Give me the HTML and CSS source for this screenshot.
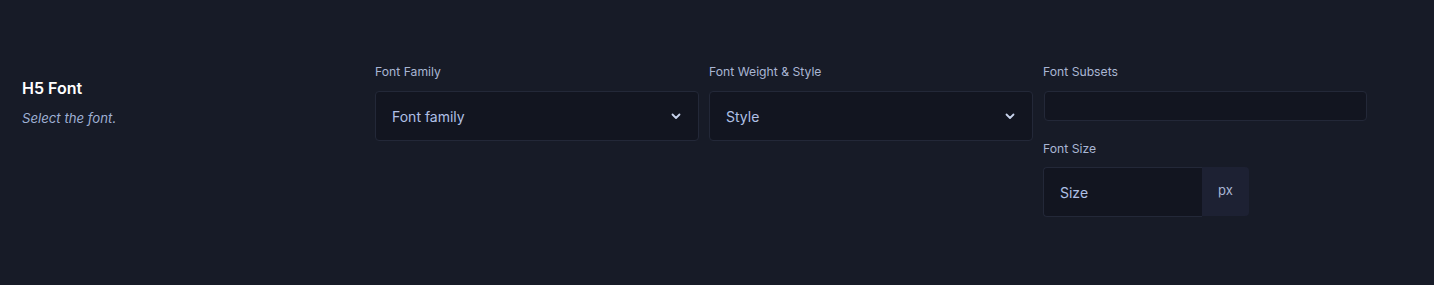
FILE: index.html
```html
<!DOCTYPE html>
<html lang="en">
  <head>
    <meta charset="UTF-8" />
    <title>H5 Font</title>
    <link rel="stylesheet" href="styles.css">
  </head>
  <body>
    <section class="setting">
      <div class="setting-info">
        <h5>H5 Font</h5>
        <p>Select the font.</p>
      </div>
      <div class="fields">
        <div class="field">
          <label for="family">Font Family</label>
          <div class="select">
            <span>Font family</span>
            <svg width="10" height="7" viewBox="0 0 10 7"><path d="M1.5 1.5 5 5l3.5-3.5" fill="none" stroke="currentColor" stroke-width="1.8" stroke-linecap="round" stroke-linejoin="round"/></svg>
          </div>
        </div>
        <div class="field">
          <label for="style">Font Weight &amp; Style</label>
          <div class="select">
            <span>Style</span>
            <svg width="10" height="7" viewBox="0 0 10 7"><path d="M1.5 1.5 5 5l3.5-3.5" fill="none" stroke="currentColor" stroke-width="1.8" stroke-linecap="round" stroke-linejoin="round"/></svg>
          </div>
        </div>
        <div class="field">
          <label for="subsets">Font Subsets</label>
          <div class="subsets"></div>
          <label for="size" class="size-label">Font Size</label>
          <div class="size">
            <input id="size" type="text" placeholder="Size" />
            <span class="unit">px</span>
          </div>
        </div>
      </div>
    </section>
  </body>
</html>
```

FILE: styles.css
```css
body {
  margin: 0;
  background-color: #171b27;
  font-family: "Inter", "Noto Sans", sans-serif;
  color: #b0c0e6;
}
.setting {
  display: flex;
  padding: 64px 22px 0;
  height: 221px;
}
.setting-info {
  width: 353px;
  padding-top: 12px;
}
h5 {
  margin: 0;
  font-size: 16px;
  line-height: 24px;
  font-weight: 600;
  color: #ffffff;
}
.setting-info p {
  margin: 8px 0 0;
  font-size: 13.2px;
  line-height: 20px;
  font-style: italic;
  color: #9fb0d4;
}
.fields {
  display: grid;
  grid-template-columns: repeat(3, 324px);
  column-gap: 10px;
  align-items: start;
}
.field {
  display: flex;
  flex-direction: column;
}
label {
  display: block;
  font-size: 12.2px;
  line-height: 16px;
  color: #a9b6d3;
  margin-bottom: 11px;
}
.select {
  height: 50px;
  box-sizing: border-box;
  display: flex;
  align-items: center;
  justify-content: space-between;
  padding: 0 17px 0 16px;
  background: #121520;
  border: 1px solid #232838;
  border-radius: 4px;
  font-size: 14px;
}
.select svg {
  color: #c8d3ec;
}
.subsets {
  height: 30px;
  box-sizing: border-box;
  margin-left: 1px;
  background: #121520;
  border: 1px solid #232838;
  border-radius: 4px;
}
.size-label {
  margin-top: 20px;
  margin-bottom: 10px;
}
.size {
  display: flex;
  width: 206px;
  height: 50px;
}
.size input {
  width: 159px;
  box-sizing: border-box;
  padding: 0 16px;
  background: #121520;
  border: 1px solid #232838;
  border-right: none;
  border-radius: 4px 0 0 4px;
  font-family: inherit;
  font-size: 14px;
  color: #b0c0e6;
  outline: none;
}
.size input::placeholder {
  color: #b0c0e6;
}
.unit {
  flex: 1;
  display: flex;
  align-items: center;
  justify-content: center;
  margin-bottom: 1px;
  padding-bottom: 3px;
  background: #1d2133;
  border-radius: 0 4px 4px 0;
  font-size: 13px;
  color: #a9b6d3;
}
```
